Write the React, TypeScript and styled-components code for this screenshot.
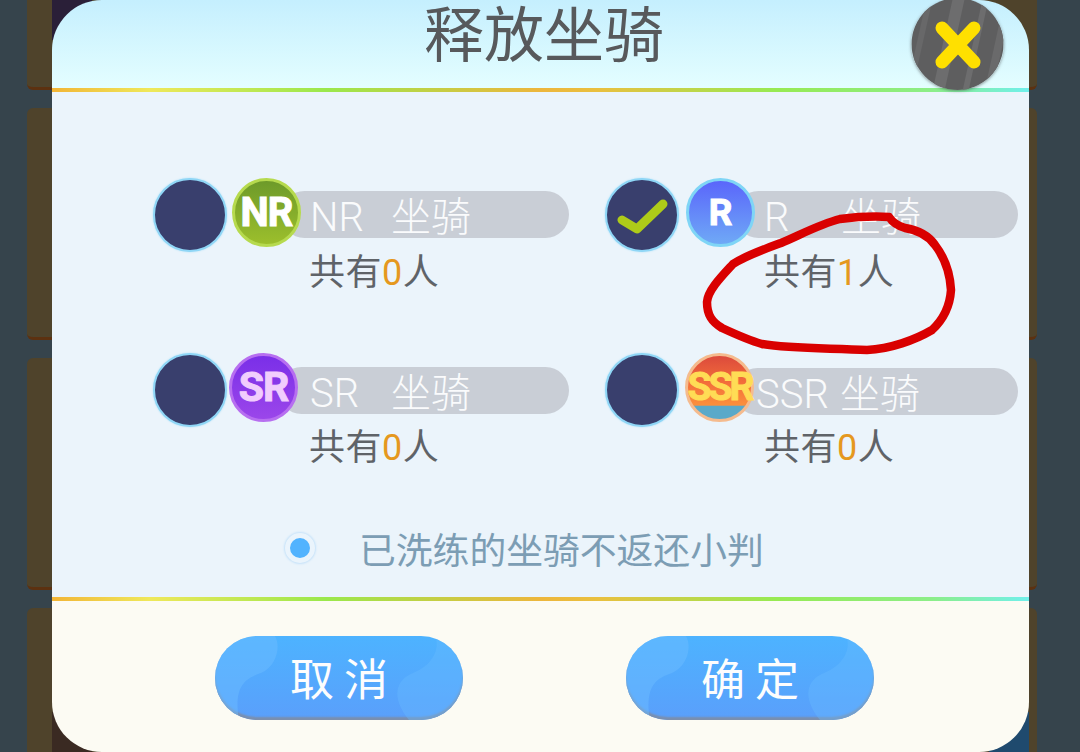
import styled, { createGlobalStyle } from "styled-components";

const GlobalStyle = createGlobalStyle`
	html, body {
		margin: 0;
		padding: 0;
		background: #36444c;
		overflow: hidden;
	}
	* {
		box-sizing: border-box;
	}
`;

const cjk = `Roboto, "Noto Sans CJK SC", sans-serif`;
const rainbow = `linear-gradient(90deg, #f2b536 0%, #efe85a 10%, #9ae84c 28%, #edb63c 50%, #e9c03f 56%, #97ea52 74%, #8cee88 90%, #70f0ec 100%)`;

const Page = styled.div`
	position: relative;
	width: 1080px;
	height: 752px;
	overflow: hidden;
	background: #36444c;
	font-family: ${cjk};
`;

const Backdrop = styled.div`
	position: absolute;
	top: -142px;
	left: 27px;
	width: 1010px;
	display: flex;
	flex-direction: column;
	gap: 18px;
`;

const BackCard = styled.div`
	height: 232px;
	border-radius: 6px;
	background: #4f432b;
	border-bottom: 3px solid #5c3110;
`;

const CornerSpot = styled.div<{ $color: string; $side: "left" | "right"; $edge: "top" | "bottom" }>`
	position: absolute;
	${(p) => p.$side}: ${(p) => (p.$side === "left" ? "52px" : "51px")};
	${(p) => p.$edge}: 0;
	width: 40px;
	height: 40px;
	background: ${(p) => p.$color};
`;

const Dialog = styled.div`
	position: relative;
	margin-left: 52px;
	width: 977px;
	height: 752px;
	border-radius: 50px;
	overflow: hidden;
	display: flex;
	flex-direction: column;
`;

const Header = styled.header`
	height: 88px;
	flex: none;
	display: flex;
	align-items: center;
	justify-content: center;
	background: linear-gradient(180deg, #c5effe 0%, #e4feff 100%);
`;

const Title = styled.h1`
	margin: -14px 0 0 7px;
	font-size: 60px;
	line-height: 74px;
	font-weight: 400;
	color: #57595c;
`;

const Rule = styled.div`
	height: 4px;
	flex: none;
	background: ${rainbow};
`;

const Body = styled.main`
	height: 505px;
	flex: none;
	padding: 85px 0 0 101px;
	background: #ebf4fb;
`;

const TierGrid = styled.div`
	display: grid;
	grid-template-columns: 452px 380px;
	grid-auto-rows: 175px;
`;

const Tier = styled.div`
	display: flex;
	align-items: flex-start;
`;

const Radio = styled.div`
	flex: none;
	width: 74px;
	height: 74px;
	margin-top: 1px;
	border-radius: 50%;
	background: #393f6d;
	border: 2px solid #8fd6f6;
	box-shadow: 0 0 2px #a5def8;
	display: flex;
	align-items: center;
	justify-content: center;
`;

const Info = styled.div<{ $gap: number }>`
	flex: 1;
	margin-left: ${(p) => p.$gap}px;
`;

const Head = styled.div<{ $width: number }>`
	display: flex;
	align-items: center;
	height: 70px;
	width: ${(p) => p.$width}px;
`;

const Badge = styled.div<{ $border: string; $fill: string; $ink: string; $size: number; $track: number }>`
	position: relative;
	z-index: 1;
	flex: none;
	width: 69px;
	height: 69px;
	border-radius: 50%;
	border: 3px solid ${(p) => p.$border};
	background: ${(p) => p.$fill};
	display: flex;
	align-items: center;
	justify-content: center;
	white-space: nowrap;
	font-family: Roboto, sans-serif;
	font-weight: 700;
	font-size: ${(p) => p.$size}px;
	letter-spacing: ${(p) => p.$track}px;
	color: ${(p) => p.$ink};
	-webkit-text-stroke: 1px ${(p) => p.$ink};
`;

const Pill = styled.div<{ $drop: number; $pad: number }>`
	flex: 1;
	height: 47px;
	margin: ${(p) => p.$drop}px 0 0 -20px;
	padding-left: ${(p) => p.$pad}px;
	border-radius: 24px;
	background: #c9ced6;
	color: #fafbfc;
	font-size: 40px;
	font-weight: 300;
	line-height: 53px;
	white-space: pre;
`;

const TierName = styled.span<{ $width: number }>`
	display: inline-block;
	width: ${(p) => p.$width}px;
`;

const Count = styled.div<{ $indent: number }>`
	margin: 6px 0 0 ${(p) => p.$indent}px;
	font-size: 36px;
	letter-spacing: 0.5px;
	line-height: 40px;
	color: #5f6368;
`;

const Amount = styled.span`
	color: #e5981e;
`;

const Note = styled.div`
	display: flex;
	align-items: center;
	height: 44px;
	margin: -1px 0 0 132px;
`;

const NoteDot = styled.div`
	width: 30px;
	height: 30px;
	flex: none;
	border-radius: 50%;
	background: #52b3fe;
	border: 5px solid #eaf4fc;
	box-shadow: 0 0 2px 1px #c6e2f9;
`;

const NoteText = styled.span`
	margin-left: 44px;
	font-size: 36.8px;
	color: #7c9db4;
	white-space: nowrap;
`;

const Footer = styled.footer`
	flex: 1;
	display: flex;
	gap: 163px;
	padding: 35px 0 0 163px;
	background: #fcfbf3;
`;

const ActionButton = styled.button`
	position: relative;
	overflow: hidden;
	width: 248px;
	height: 84px;
	padding: 0 0 3px;
	border: 0;
	border-radius: 42px;
	background: linear-gradient(180deg, #4db3ff 0%, #5a9ffb 100%);
	box-shadow: inset 0 -3px 2px #7b8fae;
	color: #fdfdfd;
	font-family: ${cjk};
	font-size: 44px;
	letter-spacing: 10px;
	text-indent: 10px;
`;

const Wave = styled.svg`
	position: absolute;
	inset: 0;
	width: 100%;
	height: 100%;
`;

const ButtonLabel = styled.span`
	position: relative;
`;

const CloseButton = styled.div`
	position: absolute;
	top: -2px;
	left: 859px;
	width: 93px;
	height: 92px;
	border-radius: 50%;
	box-shadow: 0 1px 3px rgba(60, 60, 60, 0.5);
`;

const Scribble = styled.svg`
	position: absolute;
	inset: 0;
	width: 1080px;
	height: 752px;
	pointer-events: none;
`;

const tiers = [
	{
		tier: "NR", name: "NR", nameWidth: 81, pad: 29, count: 0, checked: false, gap: 5, width: 337, drop: 5, indent: 77,
		border: "#b6da4e", fill: "linear-gradient(180deg, #6d9a2a, #9cbf2c)", ink: "#ffffff", size: 40, track: -1,
	},
	{
		tier: "R", name: "R", nameWidth: 77, pad: 29, count: 1, checked: true, gap: 7, width: 332, drop: 5, indent: 78,
		border: "#7fd5f6", fill: "linear-gradient(180deg, #5a66fb, #6fa9f6)", ink: "#ffffff", size: 37, track: 0,
	},
	{
		tier: "SR", name: "SR", nameWidth: 81, pad: 32, count: 0, checked: false, gap: 2, width: 340, drop: 7, indent: 80,
		border: "#b76ff0", fill: "linear-gradient(180deg, #7a2fe8, #9b46ea)", ink: "#f1cdfd", size: 41, track: -1,
	},
	{
		tier: "SSR", name: "SSR", nameWidth: 84, pad: 22, count: 0, checked: false, gap: 6, width: 333, drop: 9, indent: 79,
		border: "#f5bb8e", fill: "linear-gradient(180deg, #dc4a3c 0%, #f4703a 45%, #fb8f3c 78%, #5aa9c9 80%, #5aa9c9 100%)", ink: "#ffdc55", size: 39, track: -3,
	},
];

function Check() {
	return (
		<svg width="52" height="42" viewBox="0 0 52 42">
			<path d="M6 26 L21 35 L47 10" fill="none" stroke="#aecb19" strokeWidth="9" strokeLinecap="round" strokeLinejoin="round" />
		</svg>
	);
}

function ButtonWave() {
	return (
		<Wave viewBox="0 0 248 84">
			<path d="M0 0 H60 C66 10 62 30 46 37 C32 42 18 48 24 84 H0 Z" fill="#6bbcff" opacity="0.5" />
			<path d="M248 0 H220 C226 14 216 30 198 37 C180 44 176 62 194 84 H248 Z" fill="#6bbcff" opacity="0.35" />
		</Wave>
	);
}

function CloseIcon() {
	return (
		<svg width="93" height="92" viewBox="0 0 93 92">
			<defs>
				<clipPath id="close-disc">
					<circle cx="46.5" cy="46" r="46" />
				</clipPath>
			</defs>
			<g clipPath="url(#close-disc)">
				<rect width="93" height="92" fill="#5e5e5f" />
				<path d="M20 100 L44 -10 L56 -10 L32 100 Z" fill="#6d6d6e" />
				<path d="M50 100 L74 -10 L80 -10 L56 100 Z" fill="#6d6d6e" />
				<path d="M72 100 L96 -10 L104 -10 L80 100 Z" fill="#6a6a6b" />
				<path d="M-2 80 L18 -10 L24 -10 L4 80 Z" fill="#686869" />
			</g>
			<path d="M31 30 L63 64 M63 30 L31 64" stroke="#ffe000" strokeWidth="13" strokeLinecap="round" />
		</svg>
	);
}

export default function App() {
	return (
		<Page>
			<GlobalStyle />
			<Backdrop>
				{[0, 1, 2, 3].map((i) => (
					<BackCard key={i} />
				))}
			</Backdrop>
			<CornerSpot $side="left" $edge="top" $color="#2a1f38" />
			<CornerSpot $side="left" $edge="bottom" $color="#3a2a22" />
			<CornerSpot $side="right" $edge="bottom" $color="#1f4a6e" />
			<Dialog>
				<Header>
					<Title>释放坐骑</Title>
				</Header>
				<Rule />
				<Body>
					<TierGrid>
						{tiers.map((t) => (
							<Tier key={t.tier}>
								<Radio>{t.checked && <Check />}</Radio>
								<Info $gap={t.gap}>
									<Head $width={t.width}>
										<Badge $border={t.border} $fill={t.fill} $ink={t.ink} $size={t.size} $track={t.track}>
											{t.tier}
										</Badge>
										<Pill $drop={t.drop} $pad={t.pad}>
											<TierName $width={t.nameWidth}>{t.name}</TierName>坐骑
										</Pill>
									</Head>
									<Count $indent={t.indent}>
										共有<Amount>{t.count}</Amount>人
									</Count>
								</Info>
							</Tier>
						))}
					</TierGrid>
					<Note>
						<NoteDot />
						<NoteText>已洗练的坐骑不返还小判</NoteText>
					</Note>
				</Body>
				<Rule />
				<Footer>
					<ActionButton>
						<ButtonWave />
						<ButtonLabel>取消</ButtonLabel>
					</ActionButton>
					<ActionButton>
						<ButtonWave />
						<ButtonLabel>确定</ButtonLabel>
					</ActionButton>
				</Footer>
				<CloseButton>
					<CloseIcon />
				</CloseButton>
			</Dialog>
			<Scribble viewBox="0 0 1080 752">
				<path
					d="M889 217 C872 216 856 217 840 219 C820 224 800 235 781 243 C762 250 745 256 733 264 C722 276 708 290 707 302 C707 315 712 322 722 328 C735 334 748 340 762 344 C790 349 830 348 867 350 C890 349 915 340 932 330 C945 318 950 305 951 290 C950 272 945 258 935 245 C928 235 918 230 905 228 C898 226 893 223 889 217"
					fill="none"
					stroke="#d90000"
					strokeWidth="8.5"
					strokeLinecap="round"
				/>
			</Scribble>
		</Page>
	);
}
